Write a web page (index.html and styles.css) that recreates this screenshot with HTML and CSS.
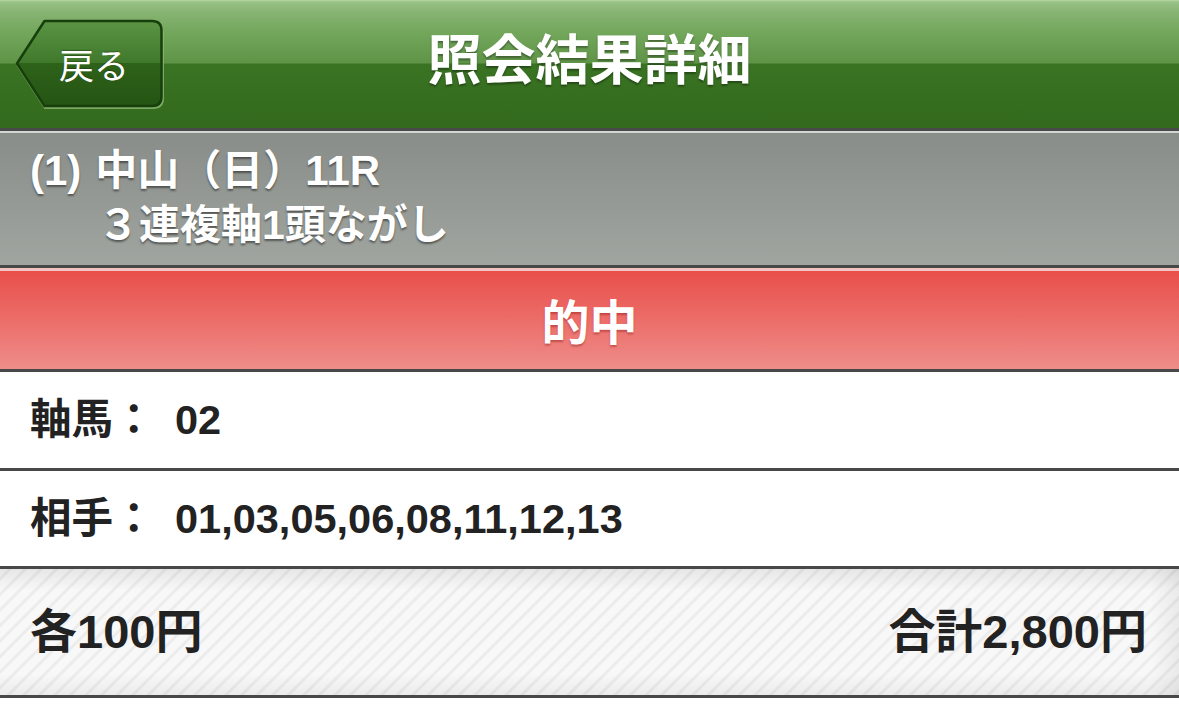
FILE: index.html
```html
<!DOCTYPE html>
<html lang="ja">
<head>
<meta charset="utf-8">
<title>照会結果詳細</title>
<link rel="stylesheet" href="styles.css">
</head>
<body>
<header class="navbar">
  <a class="back" href="#">
    <svg class="back-shape" width="150" height="92" viewBox="0 0 150 92" aria-hidden="true">
      <defs>
        <linearGradient id="btnGrad" x1="0" y1="0" x2="0" y2="1">
          <stop offset="0" stop-color="#5a9444"/>
          <stop offset="0.49" stop-color="#40792b"/>
          <stop offset="0.5" stop-color="#2e6219"/>
          <stop offset="1" stop-color="#255414"/>
        </linearGradient>
      </defs>
      <path d="M2.5,46.5 L30,4 H138 Q148,4 148,14 V79 Q148,89 138,89 H30 Z" fill="none" stroke="#8cb874" stroke-width="2" opacity="0.8"/>
      <path d="M2,44.5 L29.5,2 H137 Q146.5,2 146.5,11.5 V77.5 Q146.5,87 137,87 H29.5 Z" fill="url(#btnGrad)" stroke="#173f0b" stroke-width="2.5" stroke-linejoin="round"/>
    </svg>
    <span class="back-label">戻る</span>
  </a>
  <h1 class="title">照会結果詳細</h1>
  <span class="spacer"></span>
</header>
<div class="sep sep-dark"></div>
<div class="sep sep-light"></div>
<section class="race">
  <div class="race-line"><span class="race-no">(1)</span>中山（日）11R</div>
  <div class="race-line race-type">３連複軸1頭ながし</div>
</section>
<div class="sep sep-dark"></div>
<div class="sep sep-pink"></div>
<section class="result">的中</section>
<div class="sep sep-dark"></div>
<div class="row row-first">
  <span class="label">軸馬：</span><span class="value">02</span>
</div>
<div class="sep sep-dark"></div>
<div class="row">
  <span class="label">相手：</span><span class="value">01,03,05,06,08,11,12,13</span>
</div>
<div class="sep sep-dark"></div>
<footer class="total">
  <span>各100円</span>
  <span>合計2,800円</span>
</footer>
<div class="sep sep-dark"></div>
</body>
</html>
```
FILE: styles.css
```css
* { box-sizing: border-box; }
html, body { margin: 0; padding: 0; }
body {
  background: #ffffff;
  font-family: "Liberation Sans", "Noto Sans CJK JP", sans-serif;
  color: #222222;
  width: 1179px;
  overflow: hidden;
}
.navbar {
  height: 128px;
  display: grid;
  grid-template-columns: 1fr auto 1fr;
  align-items: center;
  padding: 0 15px;
  background: linear-gradient(to bottom,
    #b8d8a6 0px, #98c286 2px, #87b473 12px, #73a75c 32px, #5f9447 63px,
    #3a7423 64px, #376f20 90px, #336a1d 128px);
}
.back {
  position: relative;
  justify-self: start;
  width: 150px;
  height: 92px;
  display: flex;
  align-items: center;
  padding-left: 44px;
  text-decoration: none;
  margin-top: 1px;
}
.back-shape { position: absolute; left: 0; top: 0; }
.back-label {
  position: relative;
  color: #ffffff;
  font-family: "Noto Sans CJK JP", sans-serif;
  font-weight: 400;
  font-size: 35px;
  line-height: 40px;
  margin-top: -2px;
  text-shadow: 0 -1px 1px rgba(0,0,0,0.3);
}
.title {
  margin: 0 0 14px 0;
  color: #ffffff;
  font-family: "Noto Sans CJK JP", sans-serif;
  font-weight: 700;
  font-size: 54px;
  line-height: 60px;
  text-shadow: 0 2px 2px rgba(0,0,0,0.35);
}
.sep { height: 3px; }
.sep-dark { background: #474847; }
.sep-light { background: #d2d6d1; height: 2px; }
.sep-pink { background: #f2c4c2; }
.race {
  height: 132px;
  padding: 10px 0 0 30px;
  background: linear-gradient(to bottom, #898d89, #a0a5a0);
  color: #ffffff;
  font-weight: 700;
  font-size: 42px;
  text-shadow: 0 2px 2px rgba(0,0,0,0.45);
}
.race-line { line-height: 55px; white-space: nowrap; }
.race-no { display: inline-block; margin-right: 14px; }
.race-type { padding-left: 68px; font-size: 41px; }
.result {
  height: 98px;
  display: flex;
  align-items: center;
  justify-content: center;
  background: linear-gradient(to bottom, #e94f4b, #ec6d69 50%, #ee8d89);
  color: #ffffff;
  font-family: "Noto Sans CJK JP", sans-serif;
  font-weight: 700;
  font-size: 48px;
  line-height: 60px;
  padding-bottom: 2px;
  text-shadow: 0 2px 2px rgba(120,0,0,0.35);
}
.row {
  height: 95px;
  display: flex;
  align-items: center;
  padding-left: 30px;
  font-weight: 700;
  font-size: 41.5px;
  line-height: 50px;
  background: #ffffff;
}
.row-first { height: 96px; }
.label { width: 145px; flex: none; }
.value { white-space: nowrap; }
.total {
  height: 126px;
  display: flex;
  align-items: center;
  justify-content: space-between;
  padding: 0 32px 0 30px;
  font-weight: 700;
  font-size: 47px;
  line-height: 56px;
  color: #222222;
  background:
    linear-gradient(to bottom, rgba(0,0,0,0.07) 0px, rgba(0,0,0,0) 22px, rgba(0,0,0,0) 104px, rgba(0,0,0,0.05) 126px),
    linear-gradient(to right, rgba(0,0,0,0) 1150px, rgba(0,0,0,0.06) 1179px),
    repeating-linear-gradient(135deg, #f8f8f8 0px, #f8f8f8 5px, #ececec 6px, #ececec 8px, #f8f8f8 9px, #f8f8f8 11px);
}
```
